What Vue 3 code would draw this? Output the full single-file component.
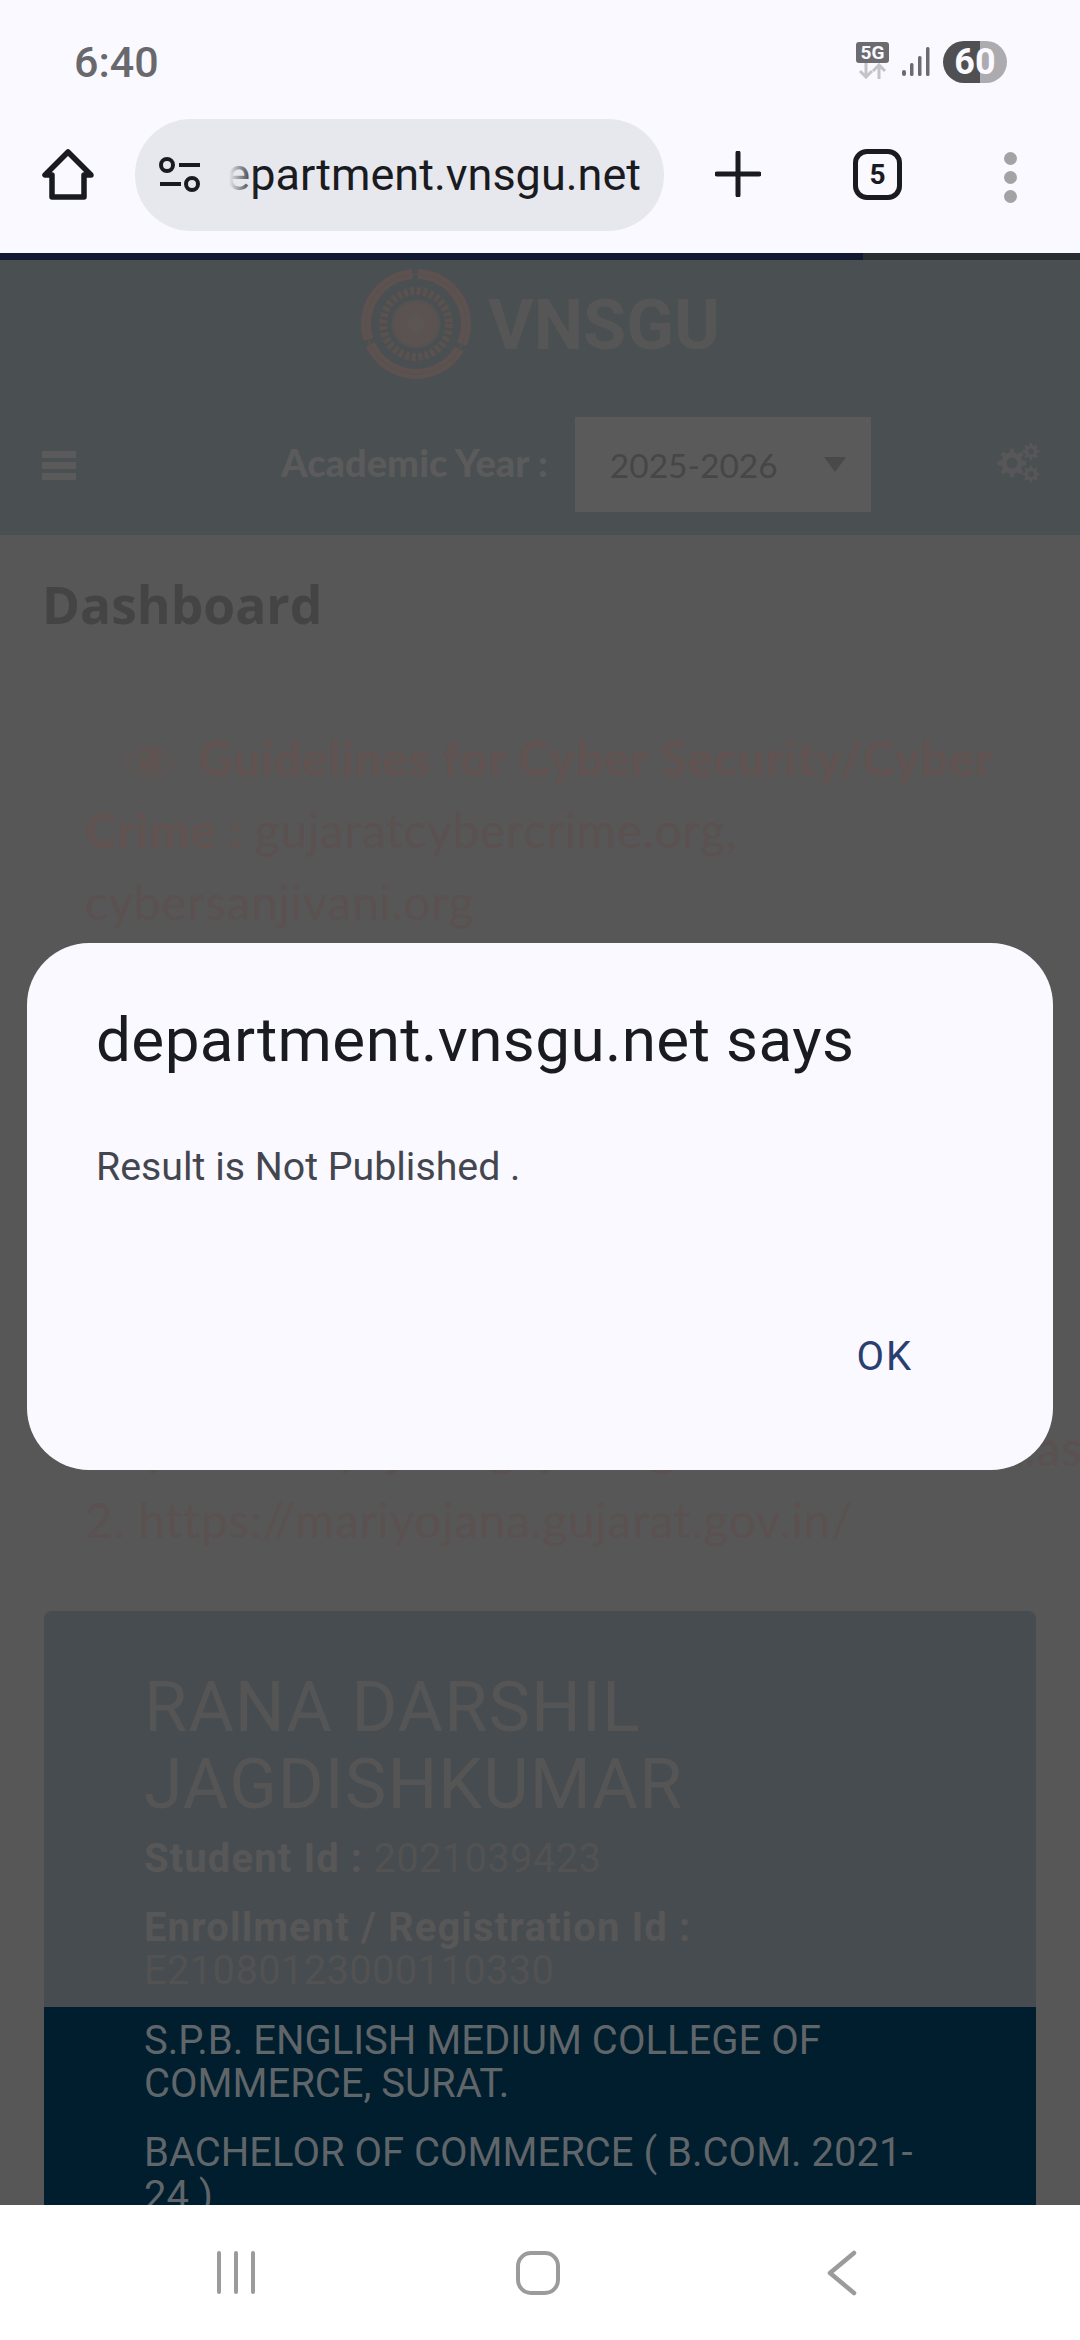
<script setup>
const navBars = [0, 1, 2]

// cog outline with a hole, teeth sized from the radius
function gearPath(cx, cy, r, hole, teeth) {
  const inner = r * 0.74
  const step = (Math.PI * 2) / teeth
  let d = ''
  for (let i = 0; i < teeth; i++) {
    const a = i * step
    const pts = [
      [inner, a - step * 0.3],
      [r, a - step * 0.17],
      [r, a + step * 0.17],
      [inner, a + step * 0.3],
    ]
    pts.forEach(([rad, ang], k) => {
      const x = (cx + rad * Math.sin(ang)).toFixed(2)
      const y = (cy - rad * Math.cos(ang)).toFixed(2)
      d += (i === 0 && k === 0 ? 'M' : 'L') + x + ' ' + y
    })
  }
  d += 'Z'
  d += `M${cx - hole} ${cy}a${hole} ${hole} 0 1 0 ${hole * 2} 0a${hole} ${hole} 0 1 0 ${-hole * 2} 0Z`
  return d
}

const cogs = [gearPath(15, 20, 14.5, 5.5, 8), gearPath(34, 8.5, 8.5, 3, 8), gearPath(34, 31, 8.5, 3, 8)].join('')
</script>

<template>
  <div class="phone">
    <div class="status">
      <span class="time">6:40</span>
      <div class="status-icons">
        <div class="net">
          <span class="net-badge">5G</span>
          <svg width="33" height="16" viewBox="0 0 33 16" fill="none" stroke="#c3c3c8" stroke-width="3">
            <path d="M10 0v14M4 8l6 6 6-6" />
            <path d="M23 16V2M17 8l6-6 6 6" />
          </svg>
        </div>
        <svg class="signal" width="28" height="30" viewBox="0 0 28 30" fill="#6c6c70">
          <rect x="0" y="23" width="4" height="6" rx="2" />
          <rect x="8" y="16" width="3.5" height="13" rx="1.5" />
          <rect x="16" y="9" width="3.5" height="20" rx="1.5" />
          <rect x="24" y="0" width="3.5" height="29" rx="1.5" />
        </svg>
        <div class="battery"><span>60</span></div>
      </div>
    </div>

    <div class="toolbar">
      <svg class="home" width="52" height="52" viewBox="0 0 52 52" fill="none" stroke="#1a1b20" stroke-width="5.5" stroke-linejoin="round">
        <path d="M26 3 3 26h7v22h32V26h7z" />
      </svg>
      <div class="omnibox">
        <svg width="42" height="36" viewBox="0 0 42 36" fill="none" stroke="#1a1b20" stroke-width="4">
          <circle cx="8" cy="8" r="6" />
          <path d="M20 8h21M1 27h21" />
          <circle cx="33" cy="27" r="6" />
        </svg>
        <div class="url"><span>department.vnsgu.net</span></div>
      </div>
      <svg class="plus" width="46" height="46" viewBox="0 0 46 46" stroke="#1a1b20" stroke-width="5" stroke-linecap="round">
        <path d="M23 2v42M2 23h42" />
      </svg>
      <div class="tabs">5</div>
      <div class="dots"><i></i><i></i><i></i></div>
    </div>

    <div class="progress"><div class="progress-done"></div></div>

    <div class="page">
      <header class="site-head">
        <div class="brand">
          <svg width="112" height="112" viewBox="0 0 112 112" fill="none">
            <g transform="rotate(-88 56 56)">
              <circle cx="56" cy="56" r="50" stroke="#5d5250" stroke-width="10" pathLength="360" stroke-dasharray="112 6 126 6 104 6" />
            </g>
            <circle cx="56" cy="56" r="50" stroke="#565352" stroke-width="1.5" />
            <circle cx="56" cy="56" r="33" stroke="#5b5250" stroke-width="8" stroke-dasharray="4 2.5" />
            <circle cx="56" cy="56" r="23" fill="#5c5351" stroke="#555352" stroke-width="3" />
            <circle cx="56" cy="56" r="17" stroke="#595351" stroke-width="5" stroke-dasharray="3 2" />
            <circle cx="56" cy="56" r="9" fill="#5b5553" />
          </svg>
          <span class="brand-name">VNSGU</span>
        </div>
        <div class="site-bar">
          <div class="burger"><i></i><i></i><i></i></div>
          <div class="year">
            <span class="year-label">Academic Year :</span>
            <div class="year-select">
              <span>2025-2026</span>
              <b class="caret"></b>
            </div>
          </div>
          <svg class="cogs" width="44" height="40" viewBox="0 0 44 40" fill="#575757" fill-rule="evenodd">
            <path :d="cogs" />
          </svg>
        </div>
      </header>

      <main class="content">
        <h1 class="title">Dashboard</h1>
        <div class="notice">
          <p class="guidelines">
            <svg class="eye" width="52" height="34" viewBox="0 0 52 34" fill="none" stroke="#5f5452" stroke-width="2.6">
              <path d="M2 17C10 6 17 2 26 2s16 4 24 15c-8 11-15 15-24 15S10 28 2 17z" />
              <circle cx="26" cy="16" r="12" fill="#5f5452" stroke="none" />
              <circle cx="21" cy="11" r="3.5" fill="#575757" stroke="none" />
            </svg>
            <b>Guidelines for Cyber Security/Cyber Crime :</b> gujaratcybercrime.org, cybersanjivani.org
          </p>
          <div class="links">
            <div class="link-line">https://mariyojana.gujarat.gov.in/<span class="link-tail">oz.aspx</span></div>
            <div class="link-line">2. https://mariyojana.gujarat.gov.in/</div>
          </div>
        </div>

        <section class="card">
          <div class="card-top">
            <h2 class="student-name">RANA DARSHIL JAGDISHKUMAR</h2>
            <p class="student-id"><b>Student Id :</b> 2021039423</p>
            <p class="student-enroll"><b>Enrollment / Registration Id :</b><br />E21080123000110330</p>
          </div>
          <div class="card-band">
            <p class="college">S.P.B. ENGLISH MEDIUM COLLEGE OF COMMERCE, SURAT.</p>
            <p class="course">BACHELOR OF COMMERCE ( B.COM. 2021-24 )</p>
          </div>
        </section>
      </main>

      <div class="dialog">
        <div class="dialog-title">department.vnsgu.net says</div>
        <div class="dialog-body">Result is Not Published .</div>
        <div class="dialog-ok">OK</div>
      </div>
    </div>

    <nav class="navbar">
      <div class="nav-recent"><i v-for="n in navBars" :key="n"></i></div>
      <div class="nav-home"></div>
      <svg width="30" height="46" viewBox="0 0 30 46" fill="none" stroke="#9b9b9b" stroke-width="4.5" stroke-linecap="round" stroke-linejoin="round">
        <path d="M27 3 3 23l24 20" />
      </svg>
    </nav>
  </div>
</template>

<style>
html, body { margin: 0; padding: 0; background: #f9f9ff; }
</style>

<style scoped>
.phone { width: 1080px; height: 2340px; display: flex; flex-direction: column; overflow: hidden; font-family: Roboto, "Liberation Sans", sans-serif; background: #f9f9ff; }

.status { height: 119px; flex: none; display: flex; justify-content: space-between; box-sizing: border-box; padding: 38px 73px 0 74px; }
.time { font-size: 43px; line-height: 48px; font-weight: 500; color: #69696d; }
.status-icons { display: flex; align-items: flex-start; }
.net { width: 33px; display: flex; flex-direction: column; margin-top: 4px; }
.net-badge { height: 21px; background: #6c6c70; color: #f9f9ff; border-radius: 3px; font-size: 19px; line-height: 21px; font-weight: 700; text-align: center; }
.signal { margin: 9px 0 0 13px; }
.battery { width: 64px; height: 42px; margin: 3px 0 0 13px; border-radius: 21px; background: linear-gradient(90deg, #505052 58%, #acabb0 58%); color: #f9f9ff; font-size: 36px; line-height: 42px; font-weight: 700; text-align: center; }

.toolbar { height: 134px; flex: none; display: flex; align-items: flex-start; }
.home { margin: 30px 0 0 42px; }
.omnibox { width: 529px; height: 112px; margin-left: 41px; border-radius: 56px; background: #e7e7ee; display: flex; align-items: center; padding-left: 24px; box-sizing: border-box; }
.url { width: 415px; margin-left: 25px; height: 60px; overflow: hidden; position: relative; display: flex; justify-content: flex-end; white-space: nowrap; font-size: 45px; line-height: 60px; color: #1a1b20; }
.url::before { content: ""; position: absolute; left: 0; top: 0; bottom: 0; width: 30px; background: linear-gradient(90deg, #e7e7ee 10%, rgba(231, 231, 238, 0)); }
.plus { margin: 32px 0 0 51px; }
.tabs { width: 49px; height: 51px; margin: 30px 0 0 92px; box-sizing: border-box; border: 5px solid #1a1b20; border-radius: 14px; font-size: 28px; line-height: 41px; font-weight: 700; text-align: center; color: #1a1b20; }
.dots { margin: 33px 0 0 102px; display: flex; flex-direction: column; gap: 6px; }
.dots i { width: 13px; height: 13px; border-radius: 50%; background: #a3a3a6; }

.progress { height: 7px; flex: none; background: #2a2d30; }
.progress-done { width: 863px; height: 100%; background: #111a30; }

.page { flex: 1; min-height: 0; position: relative; overflow: hidden; background: #575757; }

.site-head { height: 275px; background: #4a4f52; display: flex; flex-direction: column; }
.brand { height: 138px; display: flex; justify-content: center; align-items: flex-start; padding-top: 8px; box-sizing: border-box; }
.brand-name { margin: 16px 0 0 16px; font-size: 70px; line-height: 82px; font-weight: 700; color: #565656; }
.site-bar { flex: 1; display: flex; align-items: flex-start; padding-left: 42px; }
.burger { width: 34px; margin-top: 53px; display: flex; flex-direction: column; gap: 4px; }
.burger i { height: 7px; background: #5a5a5a; }
.year { display: flex; align-items: flex-start; margin-left: 205px; }
.year-label { margin-top: 41px; font-family: Lato, sans-serif; font-size: 38px; line-height: 46px; font-weight: 900; color: #5b5b5b; }
.year-select { width: 296px; height: 95px; margin: 19px 0 0 27px; background: #5a5a5a; display: flex; align-items: center; box-sizing: border-box; padding-left: 35px; font-family: Lato, sans-serif; font-size: 33.5px; color: #464646; }
.caret { margin-left: 46px; width: 0; height: 0; border-left: 11px solid transparent; border-right: 11px solid transparent; border-top: 15px solid #494949; }
.cogs { margin: 45px 0 0 126px; }

.content { padding: 0 44px; font-family: Lato, "Open Sans", sans-serif; }
.title { margin: 0 0 0 -2px; padding-top: 39px; font-family: "Open Sans", sans-serif; font-size: 51.5px; line-height: 60px; font-weight: 700; color: #444; }
.notice { padding: 88px 0 0 41px; color: #5a5150; font-size: 48px; line-height: 72px; letter-spacing: 0.6px; }
.guidelines { margin: 0; text-indent: 39px; height: 216px; }
.guidelines b { color: #605351; margin-left: 22px; font-weight: 900; letter-spacing: 0.65px; }
.eye { vertical-align: -3px; }
.links { margin-top: 474px; }
.link-line { white-space: nowrap; height: 72px; }
.link-tail { margin-left: 175px; }

.card { margin-top: 55px; border-radius: 8px 8px 0 0; overflow: hidden; background: #474c50; font-family: Roboto, sans-serif; }
.card-top { padding: 58px 60px 0 100px; height: 396px; box-sizing: border-box; color: #525252; font-size: 40px; letter-spacing: 0.3px; }
.student-name { margin: 0; font-size: 70px; line-height: 77px; font-weight: 400; letter-spacing: 1px; color: #555; }
.student-id { margin: 13px 0 0; line-height: 46px; }
.student-enroll { margin: 24px 0 0; line-height: 43px; }
.student-id b, .student-enroll b { color: #575757; letter-spacing: 1.1px; }
.card-band { padding: 12px 100px 60px 100px; background: #001e2e; color: #5f6568; font-size: 40px; line-height: 43px; }
.college, .course { margin: 0; }
.course { margin-top: 26px; }

.dialog { position: absolute; left: 27px; top: 683px; width: 1026px; height: 527px; box-sizing: border-box; padding: 57px 69px 0; background: #f9f9ff; border-radius: 62px; display: flex; flex-direction: column; }
.dialog-title { font-size: 62px; line-height: 80px; letter-spacing: 0.4px; color: #1a1b20; }
.dialog-body { margin-top: 62px; font-size: 39.3px; line-height: 50px; color: #44464f; }
.dialog-ok { align-self: flex-end; margin: 140px 71px 0 0; font-size: 40px; line-height: 50px; letter-spacing: 2px; color: #2a3f6f; }

.navbar { height: 135px; flex: none; background: #fff; display: flex; align-items: center; box-sizing: border-box; padding-left: 217px; }
.nav-recent { display: flex; gap: 13px; }
.nav-recent i { width: 4px; height: 43px; border-radius: 2px; background: #9b9b9b; }
.nav-home { width: 44px; height: 44px; margin-left: 261px; box-sizing: border-box; border: 4.5px solid #9b9b9b; border-radius: 15px; }
.navbar svg { margin-left: 267px; }
</style>
